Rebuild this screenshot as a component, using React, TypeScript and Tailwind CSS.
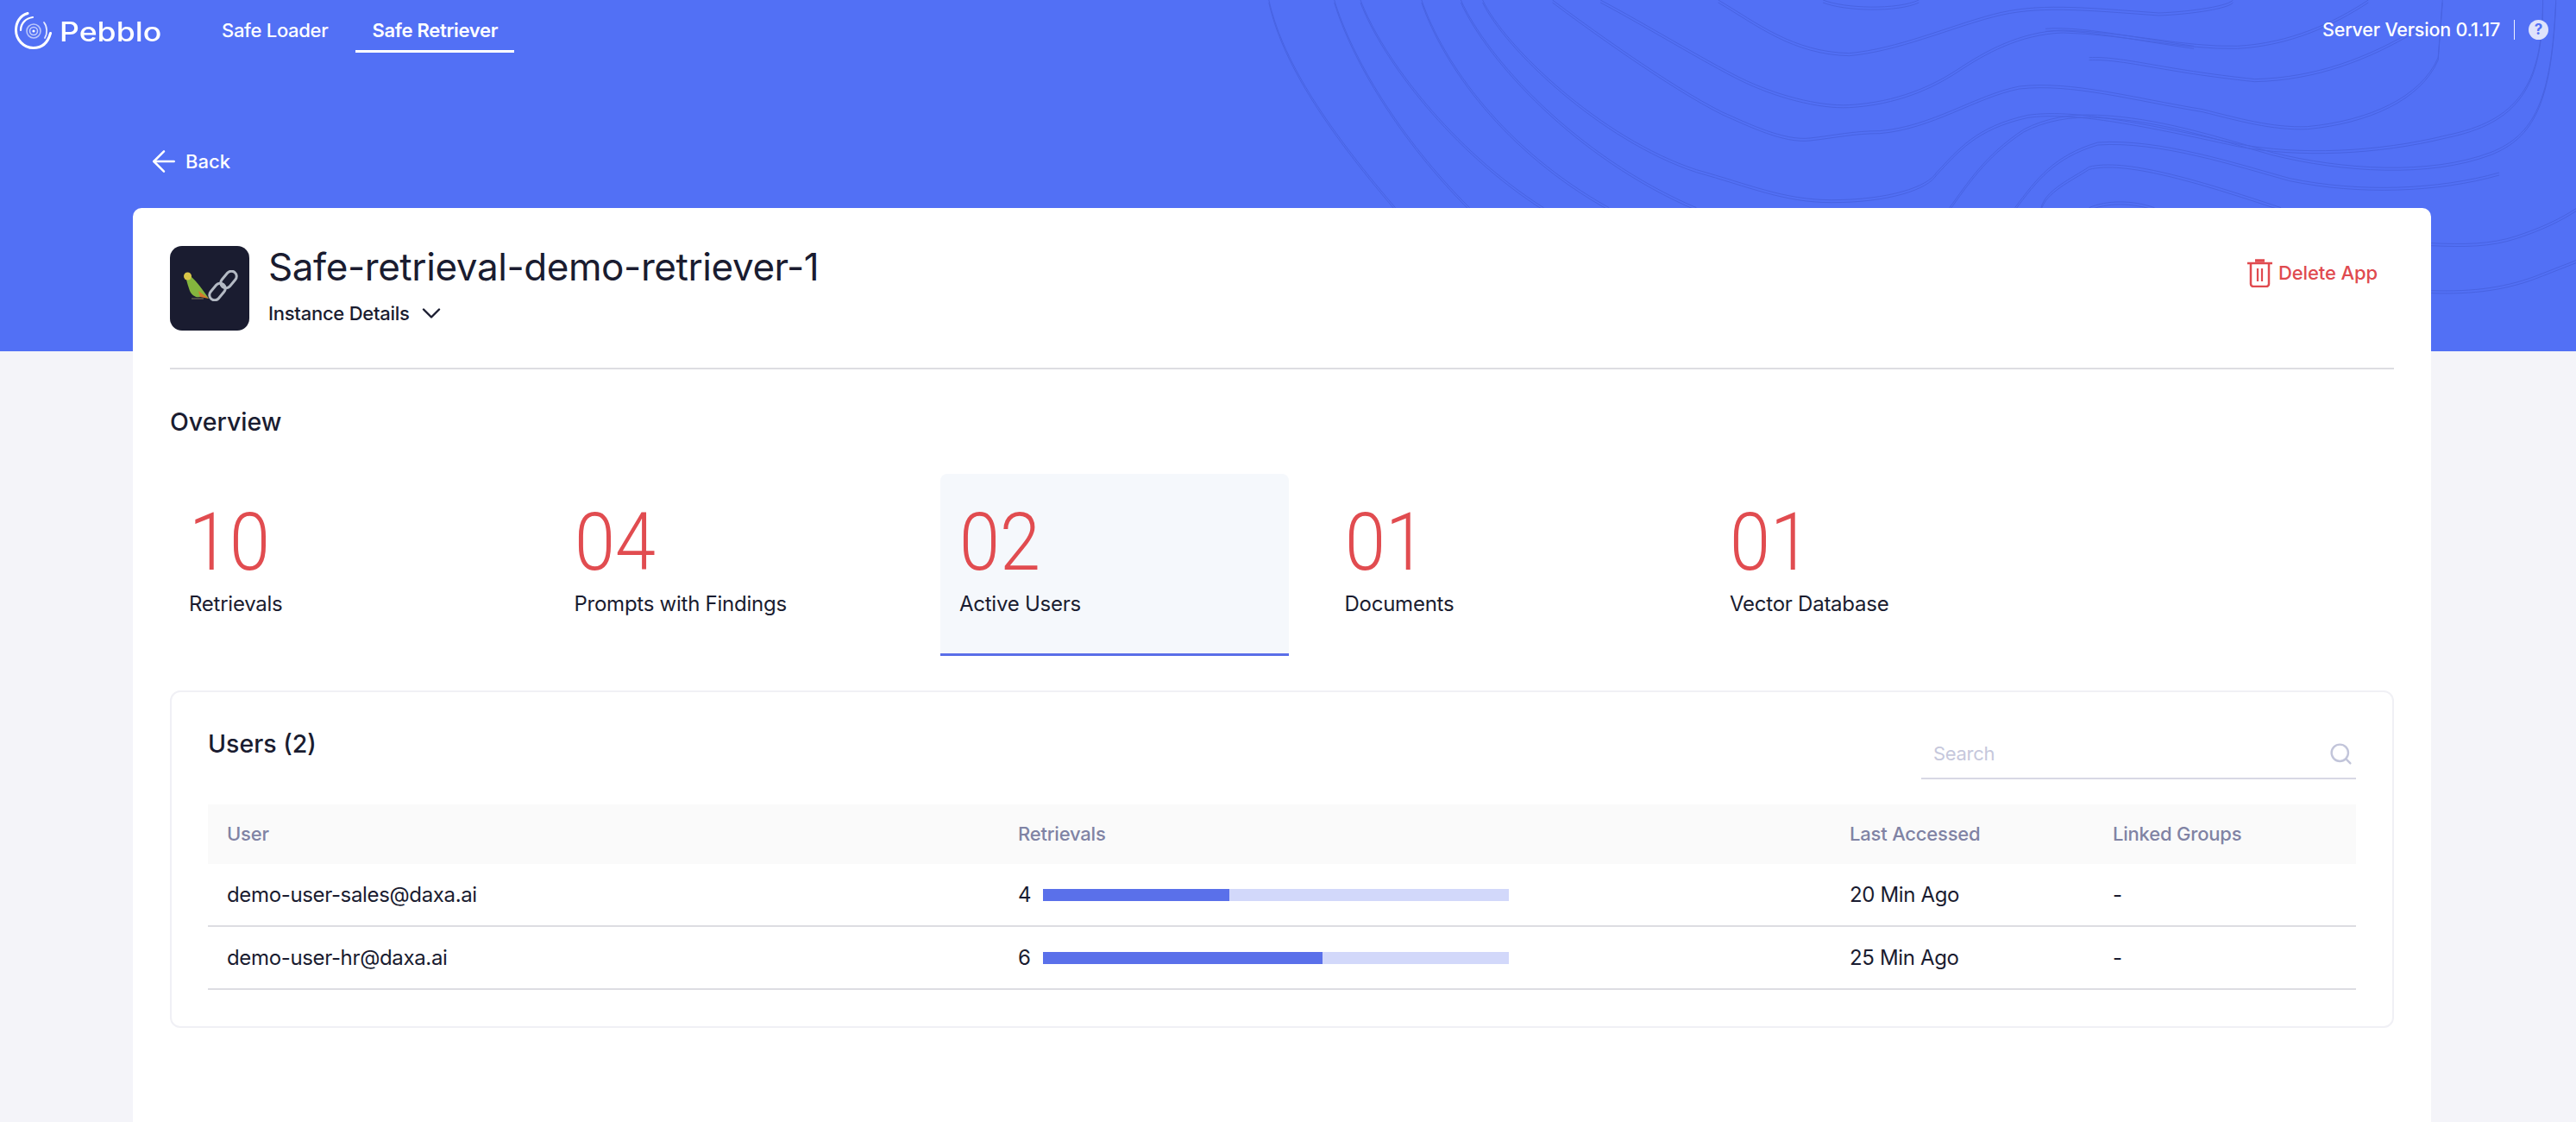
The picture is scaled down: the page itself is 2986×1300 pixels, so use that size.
import { ArrowLeft, ChevronDown, Search } from "lucide-react";
import { clsx } from "clsx";

const STATS = [
  { value: "10", label: "Retrievals" },
  { value: "04", label: "Prompts with Findings" },
  { value: "02", label: "Active Users", active: true },
  { value: "01", label: "Documents" },
  { value: "01", label: "Vector Database" },
];

const USERS = [
  { email: "demo-user-sales@daxa.ai", count: 4, pct: 40, last: "20 Min Ago" },
  { email: "demo-user-hr@daxa.ai", count: 6, pct: 60, last: "25 Min Ago" },
];

const CONTOURS = [
  "M70 0C85 200 130 420 215 722",
  "M145 0C165 200 220 480 300 722",
  "M175 0C200 200 280 520 385 722",
  "M245 0C270 220 340 520 460 722",
  "M290 0C320 200 420 540 560 722",
  "M315 0C340 160 450 480 560 590C620 640 660 695 715 695C780 695 825 650 835 600C860 520 880 440 940 400C990 380 1060 420 1180 500C1250 540 1340 530 1420 470C1500 420 1530 300 1530 0",
  "M395 0C430 80 530 300 590 390C620 430 660 490 690 480C720 470 740 455 770 455C830 440 880 330 930 300C990 280 1060 340 1140 380C1180 410 1220 445 1260 440C1330 420 1390 340 1410 200L1415 0",
  "M450 0C500 80 570 210 610 270C650 330 700 370 735 365C790 355 830 300 860 240C890 180 930 110 980 105C1050 110 1120 165 1180 160C1240 150 1290 80 1330 0",
  "M585 0C630 80 670 180 735 185C790 170 850 90 900 50C950 10 1000 25 1090 45C1130 40 1170 20 1175 0",
  "M705 0C730 30 790 35 815 0",
  "M850 722C870 640 890 540 935 450C960 410 990 395 1020 400C1090 410 1150 470 1220 530C1300 590 1400 610 1470 530C1520 470 1540 350 1545 0",
  "M925 722C950 620 970 540 1020 495C1090 480 1180 570 1240 620C1320 670 1410 660 1480 600",
  "M955 722C960 660 990 620 1010 580C1050 550 1130 620 1230 722",
  "M1010 722C1030 695 1060 695 1085 722",
  "M1402 845C1440 850 1470 850 1500 820C1530 790 1550 760 1568 725",
  "M1402 1010C1450 1015 1490 1000 1530 950L1568 905",
  "M960 100C1000 90 1060 130 1130 160",
  "M1010 200C1050 195 1090 240 1200 275C1270 270 1330 200 1385 100",
];

function ContourLines() {
  return (
    <svg
      className="absolute left-[1400px] top-0 w-[1586px] h-[420px] pointer-events-none"
      viewBox="0 0 1568 1260"
      preserveAspectRatio="none"
      fill="none"
    >
      {CONTOURS.map((d) => (
        <g key={d} stroke="#4863e2" strokeWidth="1">
          <path d={d} vectorEffect="non-scaling-stroke" />
          <path d={d} transform="translate(0 9)" vectorEffect="non-scaling-stroke" />
        </g>
      ))}
    </svg>
  );
}

function PebbloMark() {
  return (
    <svg width="43" height="43" viewBox="0 0 43 43" fill="none" stroke="white" strokeLinecap="round" className="shrink-0">
      <path d="M15 1.5C6 4 1.5 12 1.5 21c0 11 9 20.5 20 20.5 10 0 17-6 20-17" strokeWidth="3" />
      <path d="M7 21C7 13 13 7 21 6" strokeWidth="2.2" />
      <path d="M34 12c4 5 4 13 1 18" strokeWidth="1.8" opacity="0.85" />
      <circle cx="22" cy="22" r="8" strokeWidth="1.6" opacity="0.6" />
      <circle cx="22" cy="22" r="4.5" strokeWidth="1.6" opacity="0.65" />
      <circle cx="22" cy="22" r="1.6" fill="white" stroke="none" />
    </svg>
  );
}

function TrashIcon() {
  return (
    <svg width="29" height="33" viewBox="0 0 29 33" fill="none" stroke="#e04a4f" className="shrink-0">
      <path d="M0 5h29" strokeWidth="2.5" />
      <path d="M9 2h11" strokeWidth="3.5" />
      <path d="M4 5v24a3 3 0 0 0 3 3h15a3 3 0 0 0 3-3V5" strokeWidth="2.5" />
      <path d="M12 11v15M17 11v15" strokeWidth="2.2" />
    </svg>
  );
}

function AppGlyph() {
  return (
    <div className="w-[92px] h-[98px] rounded-[14px] bg-[#1a1c30] flex items-center justify-center shrink-0">
      <svg width="66" height="36" viewBox="0 0 66 36" fill="none" className="-mt-[6px] blur-[0.4px]">
        <path d="M4 6C6 2 11 3 12 8c6 5 14 16 20 25l-7-3c-5 3-12 1-15-6C8 18 6 12 6 10z" fill="#84b53e" />
        <circle cx="7.5" cy="7" r="4.5" fill="#d8c548" />
        <path d="M20 24l12 9-10-2z" fill="#d57a2c" />
        <path d="M12 33h14" stroke="#5f5d50" strokeWidth="1.5" />
        <g stroke="#b4bac4" strokeWidth="3">
          <rect x="36" y="14" width="12" height="22" rx="6" transform="rotate(40 42 25)" />
          <rect x="49" y="0" width="12" height="22" rx="6" transform="rotate(40 55 11)" />
        </g>
      </svg>
    </div>
  );
}

export default function App() {
  return (
    <div className="min-h-[1300px] bg-[#f4f4f9] font-['Inter',sans-serif] text-[#1a1c30] overflow-hidden">
      <header className="relative h-[407px] bg-[#5270f5] text-white overflow-hidden">
        <ContourLines />
        <div className="relative flex items-start h-[68px]">
          <div className="flex items-start gap-[9px] pl-[17px] pt-[14px] w-[238px] h-[68px]">
            <PebbloMark />
            <span className="inline-block origin-left scale-x-[1.15] text-[31px] leading-[36px] mt-[5px] font-medium">Pebblo</span>
          </div>
          <nav className="flex gap-[13px]">
            <a className="h-[61px] flex items-center px-[19px] pt-[12px] border-b-[3px] border-transparent text-[22px] font-medium tracking-[-0.3px]">Safe Loader</a>
            <a className="h-[61px] flex items-center px-[19px] pt-[12px] border-b-[3px] border-white text-[22px] font-semibold tracking-[-0.3px]">Safe Retriever</a>
          </nav>
          <div className="ml-auto flex items-center h-[68px] pr-[32px] text-[21.5px] font-medium tracking-[-0.2px]">
            <span>Server Version 0.1.17</span>
            <span className="w-px h-[23px] bg-white/90 ml-[16px] mr-[16px]" />
            <span className="w-[23px] h-[23px] rounded-full bg-[#dfe3fb] text-[#5270f5] text-[17px] leading-[23px] font-bold text-center">?</span>
          </div>
        </div>
        <div className="relative flex items-center gap-[5px] ml-[170px] mt-[99px] text-[22px] font-medium">
          <ArrowLeft size={40} strokeWidth={1.5} />
          <span>Back</span>
        </div>
      </header>

      <main className="relative ml-[154px] w-[2664px] -mt-[166px] min-h-[1059px] bg-white rounded-t-[10px] px-[43px]">
        <div className="flex items-start pt-[44px] pb-[43px] border-b-2 border-[#dddde2]">
          <AppGlyph />
          <div className="ml-[22px]">
            <h1 className="text-[44px] leading-[52px] -mt-[2px] tracking-[-0.42px]">Safe-retrieval-demo-retriever-1</h1>
            <div className="flex items-center gap-[7px] mt-[12px] text-[22px] leading-[32px] font-medium tracking-[-0.25px]">
              <span>Instance Details</span>
              <ChevronDown size={36} strokeWidth={1.6} className="-my-[2px]" />
            </div>
          </div>
          <div className="ml-auto mr-[19px] mt-[15px] flex items-center gap-[7px] text-[22px] font-medium text-[#e04a4f] tracking-[-0.1px]">
            <TrashIcon />
            <span>Delete App</span>
          </div>
        </div>

        <h2 className="text-[28.5px] leading-[36px] font-medium mt-[43px]">Overview</h2>

        <div className="flex gap-[42.5px] mt-[42px]">
          {STATS.map((s) => (
            <div
              key={s.label}
              className={clsx(
                "w-[404px] h-[211px] px-[22px] pt-[24px] rounded-t-[8px]",
                s.active && "bg-[#f5f8fc] border-b-[3px] border-[#5a6ee8]"
              )}
            >
              <div className="font-['Roboto',sans-serif] font-light text-[#e14c50] text-[92px] leading-[112px] origin-left scale-x-[0.92]">{s.value}</div>
              <div className="text-[24px] leading-[32px] -mt-[1px] tracking-[-0.25px] whitespace-nowrap">{s.label}</div>
            </div>
          ))}
        </div>

        <section className="mt-[40px] h-[391px] border-2 border-[#f0f0f5] rounded-[12px] px-[42px]">
          <div className="flex h-[130px]">
            <h3 className="text-[28.5px] leading-[36px] font-medium mt-[42px]">Users (2)</h3>
            <div className="ml-auto w-[504px] h-[101px] border-b-2 border-[#d8d8e4] flex items-center justify-between pl-[14px] pr-[3px] pt-[43px] text-[22px] tracking-[-0.3px] text-[#c6c8dc]">
              <span>Search</span>
              <Search size={29} strokeWidth={2} className="text-[#c2c5da]" />
            </div>
          </div>
          <div className="grid grid-cols-[939px_964px_305px_1fr] h-[69px] items-center bg-[#fafafa] text-[22px] font-medium tracking-[-0.2px] text-[#8083a4]">
            <span className="pl-[22px]">User</span>
            <span>Retrievals</span>
            <span>Last Accessed</span>
            <span>Linked Groups</span>
          </div>
          {USERS.map((u) => (
            <div
              key={u.email}
              className="grid grid-cols-[939px_964px_305px_1fr] h-[73px] items-center border-b-2 border-[#dddde2] text-[24px] tracking-[-0.35px]"
            >
              <span className="pl-[22px]">{u.email}</span>
              <div className="flex items-center">
                <span className="w-[29px]">{u.count}</span>
                <div className="w-[540px] h-[14px] bg-[#d2d8fa]">
                  <div className="h-full bg-[#5a70ea]" style={{ width: `${u.pct}%` }} />
                </div>
              </div>
              <span>{u.last}</span>
              <span>-</span>
            </div>
          ))}
        </section>
      </main>
    </div>
  );
}
